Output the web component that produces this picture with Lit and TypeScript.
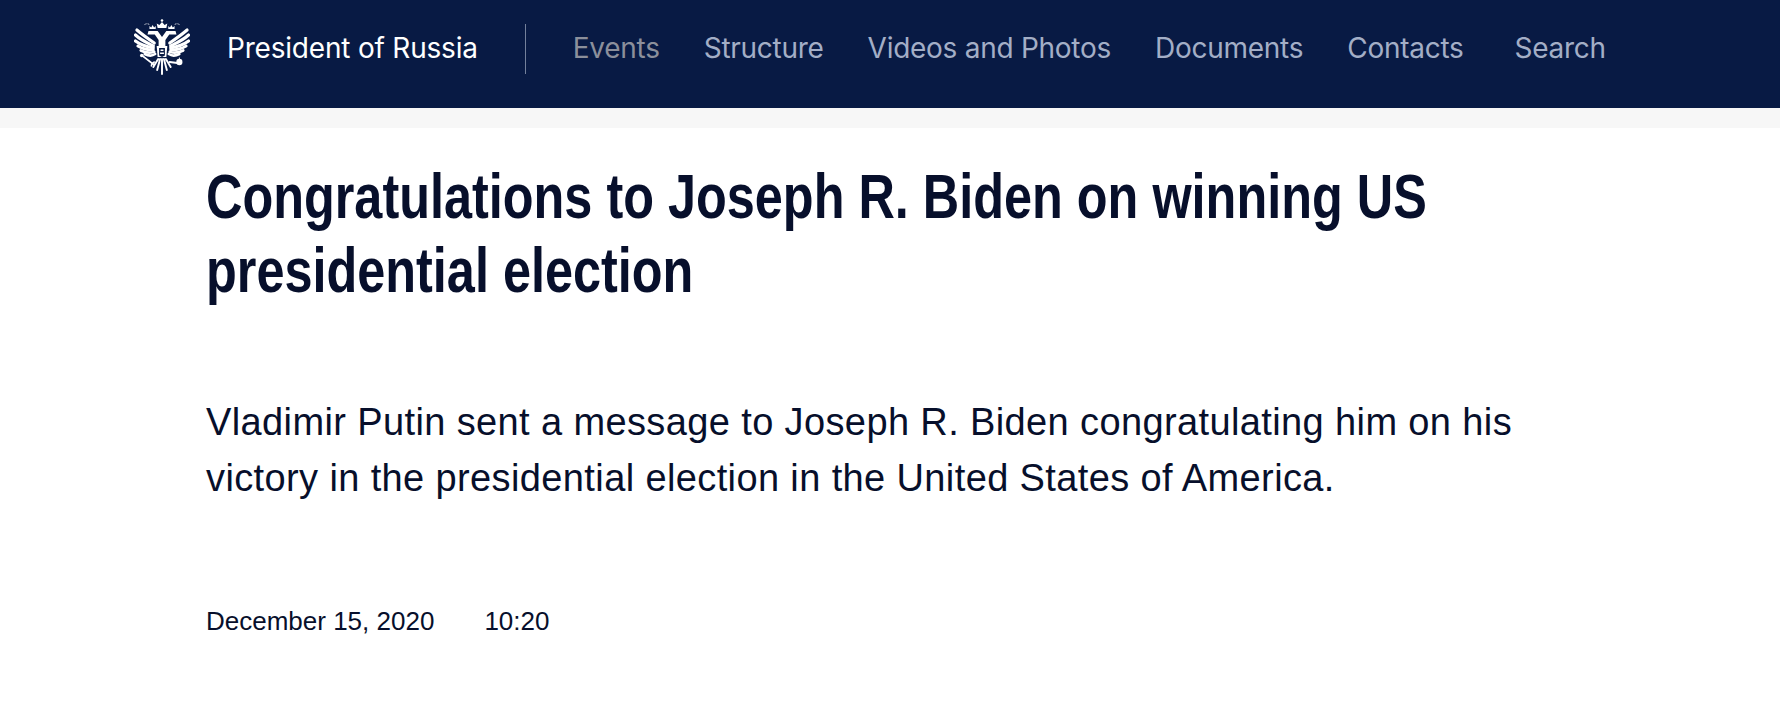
import { LitElement, html, css, svg } from "lit";
import { customElement } from "lit/decorators.js";

const BG = "#081a44";

const wing = svg`
  <g fill="none" stroke="#fff" stroke-linecap="round">
    <path d="M21 24C15 20 9 16 3 11" stroke-width="3.200"/>
    <path d="M20 27C14 24 7 21 1.500 16" stroke-width="3.200"/>
    <path d="M20 29C14 28 7 26 1.500 22" stroke-width="3.200"/>
    <path d="M20 31C15 31 9 30 4 27" stroke-width="3"/>
    <path d="M21 33C17 34 12 34 7 31.500" stroke-width="2.800"/>
    <path d="M22 35C19 37 15 37 11 35" stroke-width="2.600"/>
  </g>
  <path d="M11 5.500c2-1 3-1 5 0" fill="none" stroke="#fff" stroke-width="1" stroke-dasharray="1 1"/>
  <path d="M16 10v-3l1.800 1.500 1.500-2.500 1.500 2.500 1.700-1.500v3z" fill="#fff"/>
`;

const emblem = svg`<svg class="emblem" viewBox="0 0 58 56" width="56" height="56" preserveAspectRatio="none" fill="#fff">
  ${wing}
  <g transform="translate(58 0) scale(-1 1)">${wing}</g>
  <circle cx="29" cy="1.500" r="1.300"/>
  <path d="M24.500 9l-1-4.500 2.800 1.500 2.700-3 2.700 3 2.800-1.500-1 4.500z"/>
  <path d="M15 12h9.500l4.500 6 4.500-6H43l1 3.500h-7.500l-4 5.500v6h-7v-6l-4-5.500H14z"/>
  <path d="M23.500 27h11l-1 11h-9z"/>
  <path d="M26 29h6v7.500l-3 1.500-3-1.500z" fill="${BG}"/>
  <path d="M27.500 30.500h3v1.500h-3zM27 33.500h4v1.500h-4z"/>
  <g fill="none" stroke="#fff" stroke-linecap="round">
    <path d="M9 37L21 46" stroke-width="1.600"/>
    <path d="M21 43c-2 1-3 2-3 4" stroke-width="1.600"/>
    <path d="M37 43l8 1" stroke-width="2"/>
    <path d="M25 40l-5 8M27 40l-3 11M29 40v15M31 40l3 11M33 40l5 8" stroke-width="2"/>
  </g>
  <circle cx="8" cy="36.500" r="1.800"/>
  <circle cx="47" cy="43" r="3.200"/>
  <path d="M47 38.500v2" stroke="#fff"/>
</svg>`;

@customElement("app-root")
export class AppRoot extends LitElement {
  static styles = css`
    :host { display: block; background: #fff; min-height: 704px; font-family: "Liberation Sans", Arial, sans-serif; color: #070f2b; }
    .top { background: #081a44; height: 108px; box-sizing: border-box; padding: 19px 0 0 134px; display: flex; align-items: flex-start; }
    .emblem { display: block; flex: none; }
    .brand { margin-left: 37px; height: 58px; display: flex; align-items: center; color: #fff; font-size: 28px; white-space: nowrap; font-family: Inter, "Liberation Sans", sans-serif; letter-spacing: -0.2px; }
    .sep { width: 1px; height: 50px; background: #73809b; margin: 5px 47px 0 47px; flex: none; }
    nav { display: flex; height: 58px; align-items: center; color: #a3aec6; font-size: 28px; font-family: Inter, "Liberation Sans", sans-serif; letter-spacing: -0.27px; white-space: nowrap; }
    nav a.first { color: #8b8f9b; }
    nav a { margin-right: 44px; }
    nav a.contacts { margin-right: 51px; }
    .band { height: 20px; background: #f7f7f7; }
    main { padding: 31px 0 0 206px; }
    h1 { margin: 0; font-weight: 700; font-size: 63px; line-height: 74px; width: 1600px; transform: scaleX(0.8); transform-origin: left top; }
    p { margin: 87px 0 0; font-size: 38px; line-height: 56px; letter-spacing: 0.38px; width: 1350px; }
    .meta { margin-top: 99px; display: flex; gap: 50px; font-size: 26px; line-height: 32px; }
  `;
  render() {
    return html`
      <header class="top">
        ${emblem}
        <div class="brand">President of Russia</div>
        <div class="sep"></div>
        <nav>
          <a class="first">Events</a><a>Structure</a><a>Videos and Photos</a><a>Documents</a><a class="contacts">Contacts</a><a>Search</a>
        </nav>
      </header>
      <div class="band"></div>
      <main>
        <h1>Congratulations to Joseph R. Biden on winning US presidential election</h1>
        <p>Vladimir Putin sent a message to Joseph R. Biden congratulating him on his victory in the presidential election in the United States of America.</p>
        <div class="meta"><span>December 15, 2020</span><span>10:20</span></div>
      </main>
    `;
  }
}
